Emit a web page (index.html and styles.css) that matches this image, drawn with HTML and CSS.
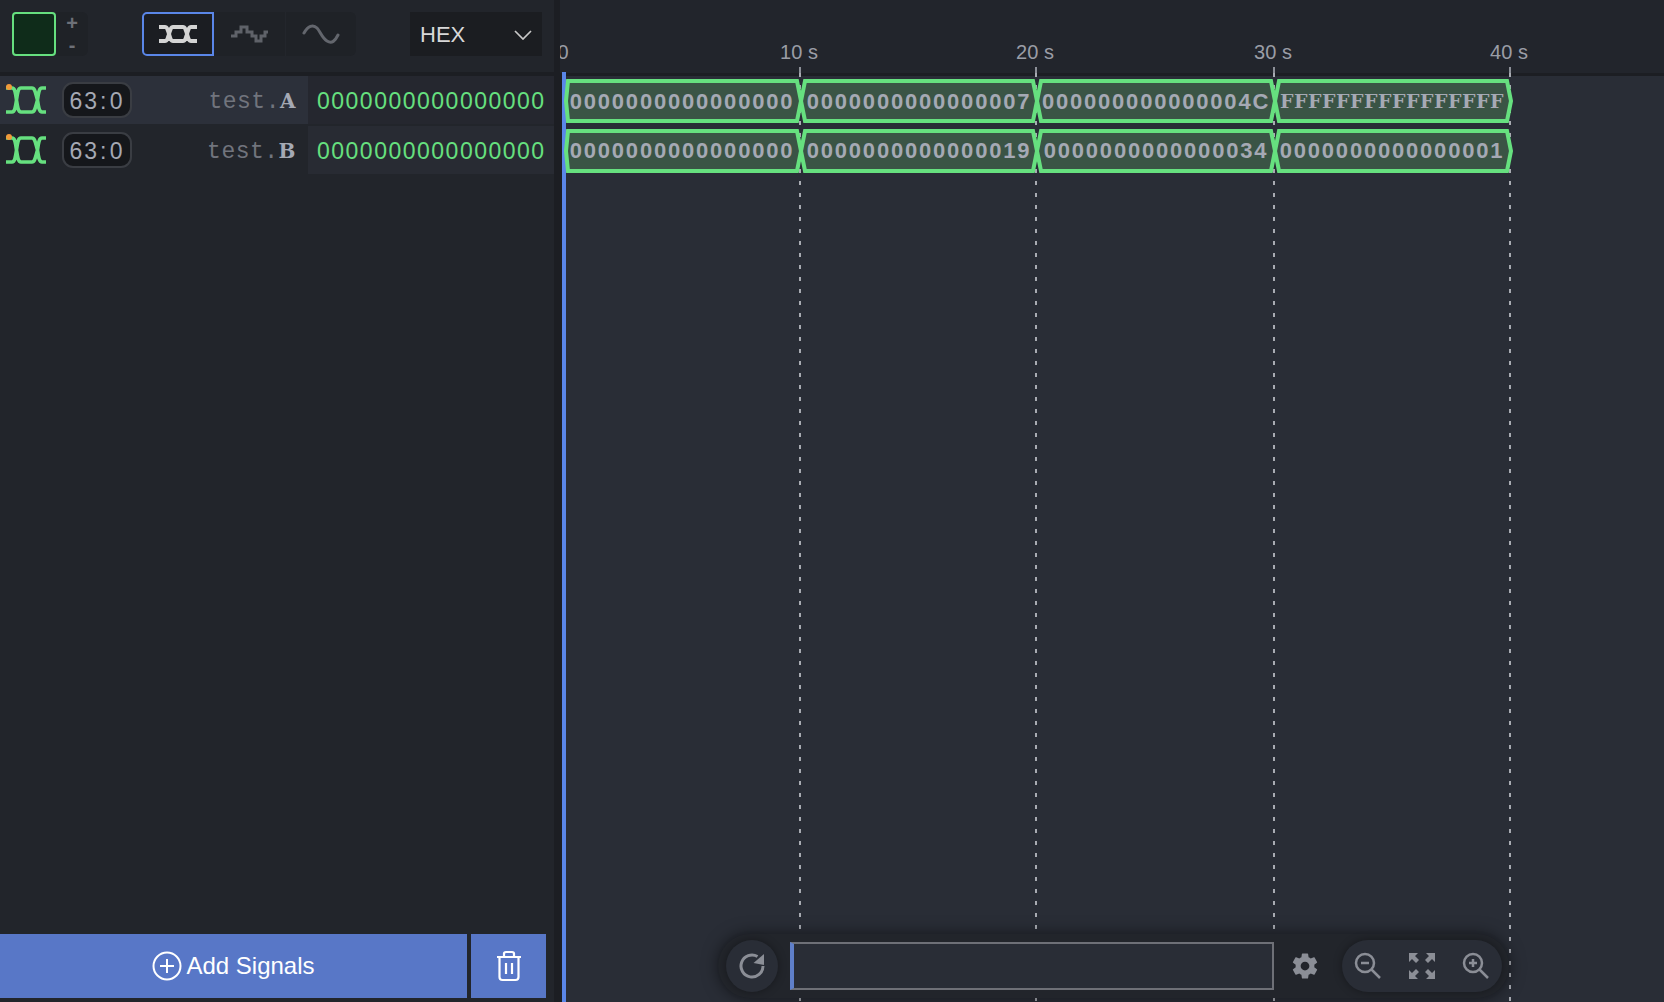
FILE: index.html
```html
<!DOCTYPE html>
<html lang="en">
<head>
<meta charset="utf-8">
<title>Waveform viewer</title>
<link rel="stylesheet" href="styles.css">
</head>
<body>
<svg class="defs" width="0" height="0" aria-hidden="true">
  <defs>
    <symbol id="busIcon" viewBox="0 0 40 30">
      <path d="M0 3H6C9 3 9.500 8 10.500 15C11.500 22 12 27 15 27H26C29 27 29.500 22 31.500 15C32.500 8 33 3 36 3H40M0 27H6C9 27 9.500 22 10.500 15C11.500 8 12 3 15 3H26C29 3 29.500 8 31.500 15C32.500 22 33 27 36 27H40" fill="none" stroke="currentColor" stroke-width="3.600"/>
    </symbol>
  </defs>
</svg>
<div class="app">
  <aside class="left">
    <header class="toolbar">
      <div class="swatch-group">
        <div class="swatch"></div>
        <div class="stepper"><span>+</span><span>-</span></div>
      </div>
      <div class="modes">
        <button class="mode mode-active">
          <svg width="40" height="20" viewBox="0 0 40 20"><path d="M1 3H7C11 3 11 17 15 17H25C29 17 29 3 33 3H39M1 17H7C11 17 11 3 15 3H25C29 3 29 17 33 17H39" fill="none" stroke="#d4d4d4" stroke-width="4"/></svg>
        </button>
        <button class="mode">
          <svg width="40" height="20" viewBox="0 0 40 20"><path d="M1 12H6V8H11V3H17V8H22V12H26V17H31V12H35V8H38" fill="none" stroke="#5f6269" stroke-width="3"/></svg>
        </button>
        <button class="mode mode-last">
          <svg width="38" height="22" viewBox="0 0 38 22"><path d="M2 10C6 3 11 1 15 5C18 8 20 15 25 18C30 21 33 18 36 12" fill="none" stroke="#63666d" stroke-width="3" stroke-linecap="round"/></svg>
        </button>
      </div>
      <div class="radix">
        <span>HEX</span>
        <svg width="18" height="10" viewBox="0 0 18 10"><path d="M1 1L9 9L17 1" fill="none" stroke="#c9c9c9" stroke-width="1.700"/></svg>
      </div>
    </header>
    <div class="rows">
      <div class="row row-on">
        <div class="sig-icon"><span class="dot"></span><svg width="40" height="30"><use href="#busIcon"/></svg></div>
        <div class="chip">63<span class="colon">:</span>0</div>
        <div class="name">test.<b>A</b></div>
        <div class="value">0000000000000000</div>
      </div>
      <div class="row">
        <div class="sig-icon"><span class="dot"></span><svg width="40" height="30"><use href="#busIcon"/></svg></div>
        <div class="chip">63<span class="colon">:</span>0</div>
        <div class="name">test.<b>B</b></div>
        <div class="value">0000000000000000</div>
      </div>
    </div>
    <div class="actions">
      <button class="add">
        <svg width="30" height="30" viewBox="0 0 30 30"><circle cx="15" cy="15" r="13.500" fill="none" stroke="#fff" stroke-width="2"/><path d="M15 8V22M8 15H22" stroke="#fff" stroke-width="2"/></svg>
        <span>Add Signals</span>
      </button>
      <button class="trash">
        <svg width="28" height="32" viewBox="0 0 28 32"><path d="M2 7H26M9 6V3.500C9 2.500 10 2 11 2H17C18 2 19 2.500 19 3.500V6M4.500 8V27C4.500 29 5.500 30 7.500 30H20.500C22.500 30 23.500 29 23.500 27V8M11 13V24M17 13V24" fill="none" stroke="#fff" stroke-width="2.200"/></svg>
      </button>
    </div>
  </aside>
  <main class="canvas">
    <svg class="wave" width="1104" height="1002" viewBox="560 0 1104 1002">
      <rect class="ruler" x="560" y="0" width="1104" height="73"/>
      <rect class="ruler-line" x="560" y="73" width="1104" height="3"/>
      <rect class="gutter" x="560" y="73" width="2" height="929"/>
      <rect class="cursor" x="562" y="72" width="4" height="930"/>
      <text class="tick-label" x="563" y="59">0</text>
      <text class="tick-label" x="799" y="59">10 s</text>
      <text class="tick-label" x="1035" y="59">20 s</text>
      <text class="tick-label" x="1273" y="59">30 s</text>
      <text class="tick-label" x="1509" y="59">40 s</text>
      <path class="tick" d="M800 67V75M1036 67V75M1274 67V75M1510 67V75"/>
      <path class="grid" d="M800 73V1002M1036 73V1002M1274 73V1002M1510 73V1002"/>
      <polygon class="seg" points="568,81 797,81 801,101 797,121 568,121 566,101"/>
      <polygon class="seg" points="805,81 1033,81 1037,101 1033,121 805,121 801,101"/>
      <polygon class="seg" points="1041,81 1271,81 1275,101 1271,121 1041,121 1037,101"/>
      <polygon class="seg" points="1279,81 1507,81 1511,101 1507,121 1279,121 1275,101"/>
      <polygon class="seg" points="568,131 797,131 801,151 797,171 568,171 566,151"/>
      <polygon class="seg" points="805,131 1033,131 1037,151 1033,171 805,171 801,151"/>
      <polygon class="seg" points="1041,131 1271,131 1275,151 1271,171 1041,171 1037,151"/>
      <polygon class="seg" points="1279,131 1507,131 1511,151 1507,171 1279,171 1275,151"/>
      <text class="seg-text" x="682" y="109">0000000000000000</text>
      <text class="seg-text" x="919" y="109">0000000000000007</text>
      <text class="seg-text" x="1156" y="109">000000000000004C</text>
      <text class="seg-text seg-slab" x="1392" y="108">FFFFFFFFFFFFFFFF</text>
      <text class="seg-text" x="682" y="158">0000000000000000</text>
      <text class="seg-text" x="919" y="158">0000000000000019</text>
      <text class="seg-text" x="1156" y="158">0000000000000034</text>
      <text class="seg-text" x="1392" y="158">0000000000000001</text>
    </svg>
    <div class="dock">
      <button class="reload">
        <svg width="28" height="28" viewBox="0 0 28 28"><path d="M25 14A11 11 0 1 1 19.500 4.500" fill="none" stroke="#8b8e96" stroke-width="3"/><path d="M15.500 11L26 2V13Z" fill="#8b8e96"/></svg>
      </button>
      <div class="search"></div>
      <button class="gear">
        <svg width="30" height="30" viewBox="0 0 24 24"><path fill="#8b8e96" d="M19.430 12.980c.040-.320.070-.640.070-.980s-.030-.660-.070-.980l2.110-1.650c.190-.150.240-.420.120-.640l-2-3.460c-.120-.220-.390-.300-.610-.220l-2.490 1c-.520-.400-1.080-.730-1.690-.980l-.380-2.650C14.460 2.180 14.250 2 14 2h-4c-.250 0-.460.180-.490.420l-.380 2.650c-.610.250-1.170.590-1.690.980l-2.490-1c-.230-.090-.490 0-.610.220l-2 3.460c-.130.220-.070.490.120.640l2.110 1.650c-.040.320-.070.650-.070.980s.030.660.070.980l-2.110 1.650c-.190.150-.240.420-.120.640l2 3.460c.120.220.390.300.610.220l2.490-1c.520.400 1.080.730 1.690.980l.380 2.650c.030.240.240.420.490.420h4c.250 0 .460-.180.490-.420l.380-2.650c.610-.250 1.170-.590 1.690-.980l2.490 1c.230.090.490 0 .610-.220l2-3.460c.120-.220.070-.490-.120-.640l-2.110-1.650zM12 15.500c-1.930 0-3.500-1.570-3.500-3.500s1.570-3.500 3.500-3.500 3.500 1.570 3.500 3.500-1.570 3.500-3.500 3.500z"/></svg>
      </button>
      <div class="zooms">
        <svg width="28" height="28" viewBox="0 0 28 28"><circle cx="11" cy="11" r="9" fill="none" stroke="#8b8e96" stroke-width="2.500"/><path d="M7 11H15M17.500 17.500L26 26" stroke="#8b8e96" stroke-width="2.500"/></svg>
        <svg width="28" height="28" viewBox="0 0 28 28"><path fill="#8b8e96" d="M1 1H10L7 4L11 8L8 11L4 7L1 10ZM27 1V10L24 7L20 11L17 8L21 4L18 1ZM1 27V18L4 21L8 17L11 20L7 24L10 27ZM27 27H18L21 24L17 20L20 17L24 21L27 18Z"/></svg>
        <svg width="28" height="28" viewBox="0 0 28 28"><circle cx="11" cy="11" r="9" fill="none" stroke="#8b8e96" stroke-width="2.500"/><path d="M7 11H15M11 7V15M17.500 17.500L26 26" stroke="#8b8e96" stroke-width="2.500"/></svg>
      </div>
    </div>
  </main>
</div>
</body>
</html>
```
FILE: styles.css
```css
* { box-sizing: border-box; }
html, body { margin: 0; height: 100%; }
body { background: #1c1e23; font-family: "Liberation Sans", Arial, sans-serif; overflow: hidden; }
button { border: 0; padding: 0; margin: 0; font: inherit; color: inherit; display: flex; align-items: center; justify-content: center; }
.defs { position: absolute; }
.app { display: flex; height: 1002px; }

.left { width: 560px; flex: none; display: flex; flex-direction: column; background: #22252b; border-right: 6px solid #1c1e23; }
.toolbar { height: 76px; flex: none; display: flex; align-items: flex-start; padding: 12px 0 0 12px; border-bottom: 4px solid #1c1e23; }
.swatch-group { display: flex; width: 76px; }
.swatch { width: 44px; height: 44px; background: #0f2c1a; border: 2px solid #66e07f; border-radius: 4px; }
.stepper { width: 32px; height: 44px; background: #1f2227; border-radius: 0 6px 6px 0; display: flex; flex-direction: column; align-items: center; color: #6d7078; font-size: 20px; line-height: 22px; font-weight: bold; }
.modes { margin-left: 54px; display: flex; width: 214px; height: 44px; background: #1f2227; border-radius: 6px; }
.mode { height: 44px; width: 71px; background: transparent; }
.mode-active { width: 72px; background: #1b1d22; border: 2px solid #5a86e8; border-radius: 5px 0 0 5px; }
.mode-last { border-left: 1px solid #23262c; }
.radix { margin-left: 54px; width: 132px; height: 44px; background: #1b1d21; display: flex; align-items: center; justify-content: space-between; padding: 1px 10px 0; color: #d8d8d8; font-size: 22px; }

.rows { flex: 1; display: flex; flex-direction: column; gap: 2px; }
.row { height: 48px; display: flex; align-items: center; padding-left: 6px; }
.row-on { background: #2c303a; }
.sig-icon { position: relative; width: 40px; height: 30px; color: #66e07f; }
.dot { position: absolute; left: 0; top: -1px; width: 6px; height: 6px; border-radius: 50%; background: #f09a3a; z-index: 1; }
.chip { margin-left: 16px; width: 70px; height: 36px; background: #15171b; border: 2px solid #3a3d43; border-radius: 11px; color: #a5a9b4; font: 23px/34px "Liberation Sans", sans-serif; text-align: center; letter-spacing: 1.800px; white-space: nowrap; }
.colon { display: inline-block; width: 13px; margin-left: -2px; letter-spacing: 0; }
.name { width: 176px; padding: 3px 12px 0 0; text-align: right; color: #71747d; font: 23px "Liberation Mono", monospace; letter-spacing: .5px; }
.name b { color: #a5a9b4; font: bold 20px "DejaVu Serif", serif; }
.value { flex: 1; height: 100%; padding: 2px 0 0 9px; display: flex; align-items: center; background: #282b33; color: #66e07f; font: 23px "Liberation Sans", sans-serif; letter-spacing: 1.500px; }
.row-on .value { background: #25272f; }

.actions { height: 68px; flex: none; display: flex; gap: 4px; padding-bottom: 4px; }
.add { width: 467px; height: 64px; background: #5877c7; color: #fff; font-size: 24px; gap: 4px; }
.trash { width: 75px; height: 64px; background: #5877c7; }

.canvas { position: relative; flex: 1; background: #292d36; overflow: hidden; }
.wave { display: block; }
.ruler { fill: #22252c; }
.ruler-line { fill: #1c1e23; }
.gutter { fill: #1c1e23; }
.cursor { fill: #5a86e8; }
.tick-label { fill: #9a9da6; font: 20px "Liberation Sans", sans-serif; text-anchor: middle; }
.tick { stroke: #8d9098; stroke-width: 2; fill: none; }
.grid { stroke: #a8abb2; stroke-width: 2; stroke-dasharray: 4 8; fill: none; }
.seg { fill: #3a5445; stroke: #66e07f; stroke-width: 4; }
.seg-text { fill: #a5a9b4; font: bold 22px "Liberation Sans", sans-serif; letter-spacing: 1.800px; text-anchor: middle; }
.seg-slab { font: bold 19px "DejaVu Serif", serif; letter-spacing: .5px; }

.dock { position: absolute; left: 158px; top: 934px; width: 791px; height: 64px; background: #22252b; border-radius: 32px; box-shadow: 0 0 16px rgba(0,0,0,.5); display: flex; align-items: center; padding: 0 7px 0 8px; }
.reload { width: 52px; height: 52px; border-radius: 50%; background: #292d36; box-shadow: 0 0 8px rgba(0,0,0,.35); flex: none; }
.search { margin-left: 12px; width: 484px; height: 48px; background: #292d36; border: 2px solid #6e7077; border-left: 4px solid #5f7fc9; flex: none; }
.gear { margin-left: 16px; width: 30px; height: 30px; background: transparent; flex: none; }
.zooms { margin-left: 22px; width: 160px; height: 52px; border-radius: 26px; background: #292d36; display: flex; align-items: center; justify-content: space-between; padding: 0 12px; box-shadow: 0 0 8px rgba(0,0,0,.35); }
```
